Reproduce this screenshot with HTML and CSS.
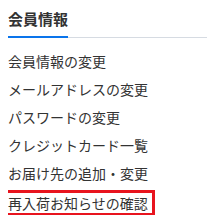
FILE: index.html
```html
<!DOCTYPE html>
<html lang="ja">
<head>
  <meta charset="UTF-8">
  <title>会員情報</title>
  <link rel="stylesheet" href="styles.css">
</head>
<body>
<div class="side-menu">
  <div class="menu-head">
    <h2 class="menu-title">会員情報</h2>
  </div>
  <ul class="menu-list">
    <li><a href="#">会員情報の変更</a></li>
    <li><a href="#">メールアドレスの変更</a></li>
    <li><a href="#">パスワードの変更</a></li>
    <li><a href="#">クレジットカード一覧</a></li>
    <li><a href="#">お届け先の追加・変更</a></li>
    <li><a href="#" class="current">再入荷お知らせの確認</a></li>
  </ul>
</div>
</body>
</html>
```

FILE: styles.css
```css
body {
  margin: 8px;
  background: #fff;
  font-family: "Noto Sans CJK JP", "Noto Sans", sans-serif;
  color: #333;
}

.menu-head {
  display: flex;
  border-bottom: 1px solid #d6dbe2;
}
.menu-title {
  margin: 0 0 -1px 0;
  padding-bottom: 6px;
  font-size: 15px;
  line-height: 22px;
  font-weight: bold;
  border-bottom: 2px solid #0a74eb;
}

.menu-list {
  list-style: none;
  margin: 9px 0 0 0;
  padding: 0;
}
.menu-list li {
  font-size: 14px;
  line-height: 28px;
}
.menu-list a {
  color: #333;
  text-decoration: none;
}
.menu-list a.current {
  display: inline-block;
  vertical-align: middle;
  line-height: 20px;
  margin-left: -1px;
  padding: 0 4px 0 1px;
  outline: 3px solid #e8141e;
}
```
